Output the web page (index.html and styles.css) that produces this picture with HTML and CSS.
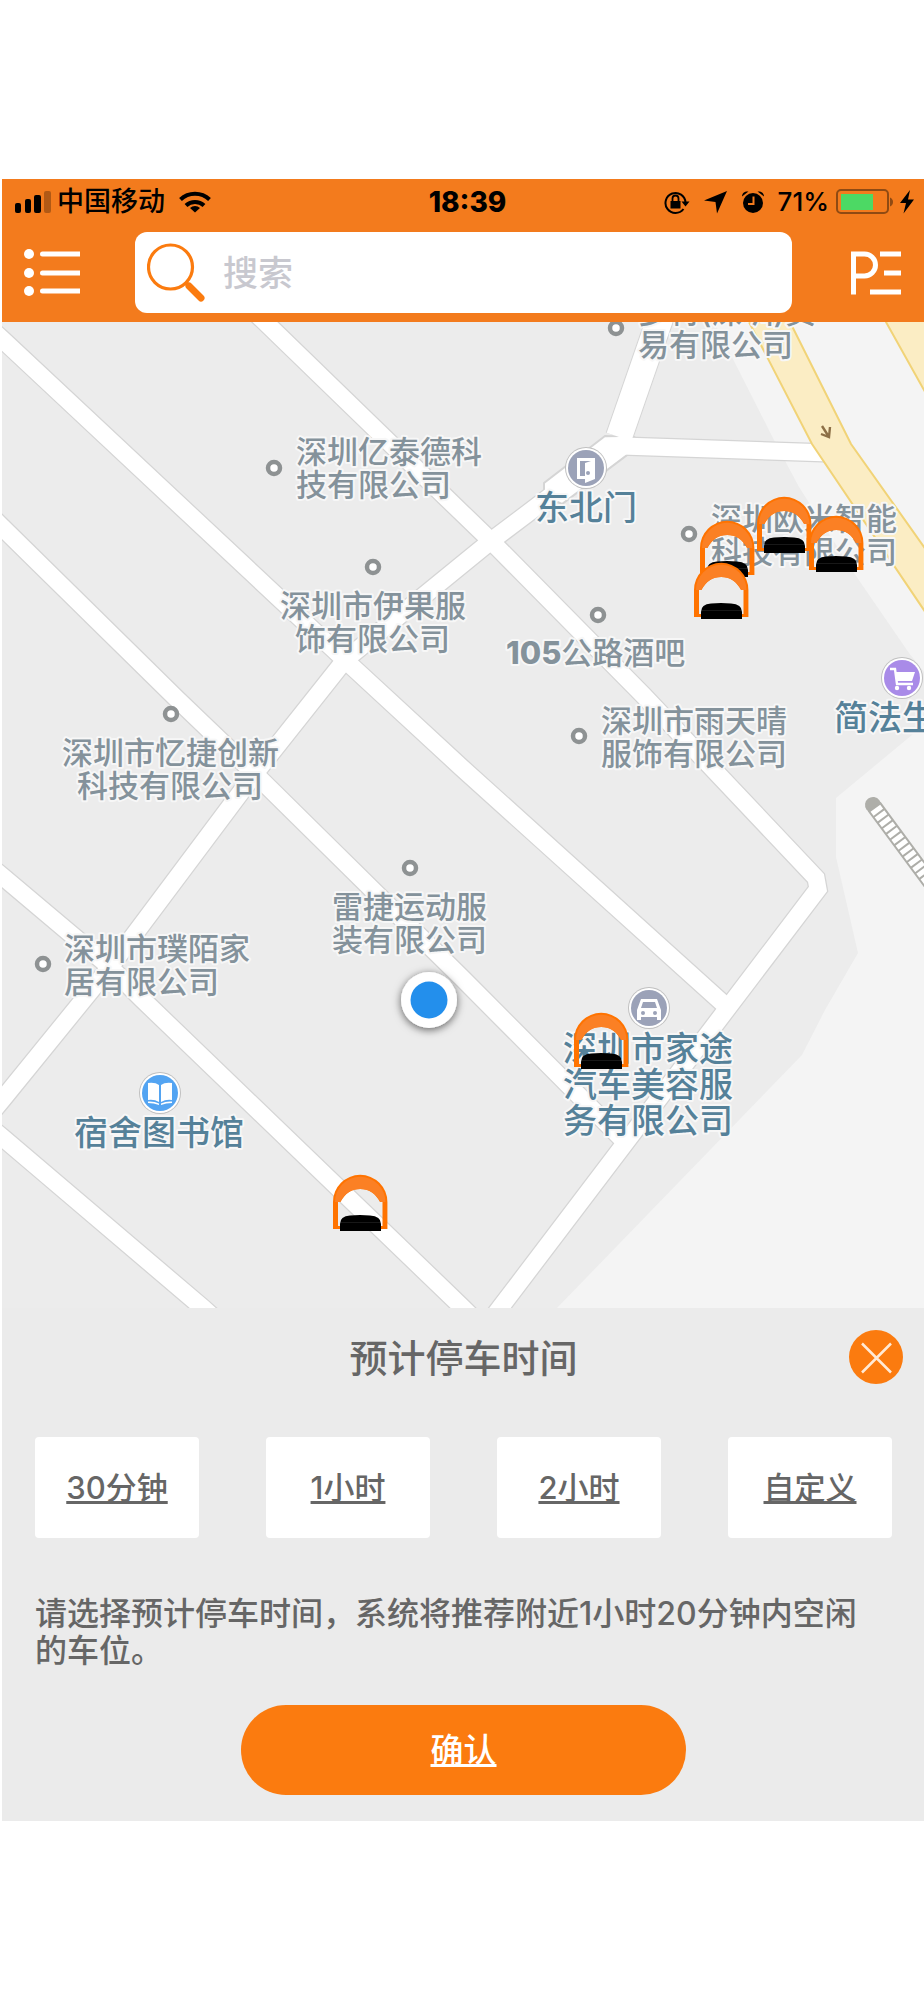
FILE: index.html
```html
<!DOCTYPE html>
<html lang="zh-CN">
<head>
<meta charset="utf-8">
<meta name="viewport" content="width=device-width, initial-scale=1">
<title>停车地图</title>
<link rel="stylesheet" href="styles.css">
</head>
<body>
<main class="app">
  <header class="header">
    <div class="status">
      <div class="status-side">
        <svg class="signal" viewBox="0 0 36 24" width="36" height="24" aria-hidden="true"><rect x="0" y="13" width="6" height="10" rx="2"/><rect x="10" y="9" width="6" height="14" rx="2"/><rect x="19" y="5" width="7" height="18" rx="2"/><rect x="29" y="1" width="7" height="22" rx="2" opacity=".27"/></svg>
        <span class="carrier">中国移动</span>
        <svg class="wifi" viewBox="0 0 32 24" width="32" height="24" fill="none" stroke="#000" stroke-width="4" aria-hidden="true"><path d="M1.500 9.500a21 21 0 0 1 29 0M7 15.500a13 13 0 0 1 18 0"/><path d="M16 22.500l-5-4.500a7.500 7.500 0 0 1 10 0z" fill="#000" stroke="none"/></svg>
      </div>
      <time class="clock">18:39</time>
      <div class="status-side status-right">
        <svg viewBox="0 0 26 24" width="26" height="24" aria-hidden="true"><path d="M19.500 19A10 10 0 1 1 21.500 12.500" fill="none" stroke="#000" stroke-width="2"/><path d="M17.500 11.500h8L21.500 16.500zM6.500 11h10v7.500h-10z"/><path d="M8.500 12V8.500a3 3 0 0 1 6 0V12" fill="none" stroke="#000" stroke-width="1.800"/></svg>
        <svg class="nav-arrow" viewBox="0 0 24 24" width="24" height="24" aria-hidden="true"><path d="M23 1L13 23.500 11.500 12 0 10.500z"/></svg>
        <svg class="alarm" viewBox="0 0 22 24" width="22" height="24" aria-hidden="true"><circle cx="11" cy="13" r="10"/><path d="M0 6.500C0 3 3 1 6.500 1.500zM22 6.500C22 3 19 1 15.500 1.500z"/><path d="M11.500 6.500V14H6" fill="none" stroke="#f37b1d" stroke-width="2"/></svg>
        <span class="percent">71%</span>
        <svg class="battery" viewBox="0 0 58 26" width="58" height="26" aria-hidden="true"><rect x="1" y="1" width="51" height="23" rx="4" fill="none" stroke="#8f4a13" stroke-width="2"/><rect x="5" y="5" width="32" height="16" fill="#4cd964"/><path d="M54 8.500q3 1.500 3 4.500t-3 4.500z" fill="#8f4a13"/></svg>
        <svg class="bolt" viewBox="0 0 14 24" width="14" height="24" aria-hidden="true"><path d="M10 0L0 13h6L3.500 23.500 14 9.500H8z"/></svg>
      </div>
    </div>
    <div class="toolbar">
      <button class="tool" type="button" aria-label="菜单">
        <svg viewBox="0 0 56 48" width="56" height="48" fill="#fff" aria-hidden="true"><circle cx="5" cy="5" r="5"/><circle cx="5" cy="24" r="5"/><circle cx="5" cy="42" r="5"/><path d="M18.500 2.500H56v5H18.500a2.500 2.500 0 0 1 0-5zM18.500 21.500H56v5H18.500a2.500 2.500 0 0 1 0-5zM18.500 39.500H56v5H18.500a2.500 2.500 0 0 1 0-5z"/></svg>
      </button>
      <label class="search">
        <svg viewBox="0 0 58 60" width="58" height="60" fill="none" stroke="#fb7b0f" aria-hidden="true"><circle cx="23.500" cy="24" r="22" stroke-width="3.200"/><path d="M39 40l3 3" stroke-width="4"/><path d="M42 43l12 12" stroke-width="7" stroke-linecap="round"/></svg>
        <input class="search-input" type="search" placeholder="搜索" aria-label="搜索">
      </label>
      <button class="tool tool-right" type="button" aria-label="停车">
        <svg viewBox="0 0 50 44" width="50" height="44" fill="none" stroke="#fff" stroke-width="5" aria-hidden="true"><path d="M2.500 43.500V3h11a11 11 0 0 1 0 22H3"/><path d="M29 3h21M33 22h17M19 41h31"/></svg>
      </button>
    </div>
  </header>

  <section class="map" aria-label="地图">
    <svg class="map-canvas" viewBox="2 322 922 986" role="img" aria-label="附近车位">
      <defs>
        <filter id="glow" x="-50%" y="-50%" width="200%" height="200%"><feDropShadow dx="0" dy="2" stdDeviation="4" flood-color="#000" flood-opacity=".6"/></filter>
        <g id="roads">
          <path d="M-8 330L2 339 345 660 462 768 727 1007"/>
          <path d="M245 303L265 322 462 513 491 541 644 696 816 878 818 889 500 1308 490 1321"/>
          <path d="M-8 517L2 527 178 700 253 772 462 978 621 1138"/>
          <path d="M-8 868L2 876 110 967 142 999 463 1308 473 1318"/>
          <path d="M-8 1129L2 1137 203 1308 213 1317"/>
          <path d="M622 446L556 492 491 541 345 660 253 776 110 967 2 1100-8 1112"/>
          <path d="M622 446L830 453"/>
        </g>
        <g id="poi">
          <circle r="21" fill="#c0c0c0"/><circle r="20" fill="#fff"/><circle r="18"  fill="currentColor"/>
        </g>
        <g id="dot"><circle r="6" fill="#fff" stroke="#8e9293" stroke-width="4.500"/></g>
        <g id="spot">
          <path d="M0 54V27a27.200 27.200 0 0 1 54.400 0v27H45v-3h4.500V27h-2.500q-7-13-19.800-13T7.500 27H5v24h4v3z" fill="#ff7300"/>
          <path d="M2 27a25.200 25.200 0 0 1 50.400 0h-5q-7-13-20.200-13T7 27z" fill="#fb8024"/>
          <path d="M7 56V49q0-8 10-8.500 10-.800 20 0 11 .500 11 8.500v7z"/>
          <path d="M8 47.500h39" stroke="#222" stroke-width=".7"/>
        </g>
      </defs>

      <rect x="2" y="322" width="922" height="986" fill="#ececec"/>
      <path d="M714 322L735 363 775 442 799 487 854 573 909 653 924 672V322zM924 725L836 798V857L858 953 825 1010 802 1055 557 1308H924z" fill="#f4f4f4"/>

      <g fill="none">
        <use href="#roads" stroke="#d5d5d5" stroke-width="19.500"/>
        <path d="M662 313L619 437" stroke="#d5d5d5" stroke-width="28"/>
        <path d="M605 436L544 483V496L562 504 627 455 634 437z" fill="#fff" stroke="#d5d5d5" stroke-width="2"/>
        <use href="#roads" stroke="#fff" stroke-width="17"/>
        <path d="M662 313L619 437" stroke="#fff" stroke-width="26"/>
        <path d="M606 438L546 485V496L562 502 626 454 632 436z" fill="#fff"/>
      </g>
      <path d="M744 312L749 322 812 444 934 625V561L851 444 790 322 785 312zM881 312L886 322 924 390 934 408V312z" fill="#fbedc4" stroke="#f1d377" stroke-width="2"/>
      <path d="M822 426l7 11m-8-3l8 3 1-10" fill="none" stroke="#8d7047" stroke-width="2.400"/>

      <g transform="translate(873 805) rotate(53.500)">
        <circle r="8" fill="#aeaea9"/>
        <path d="M3-7H100V7H3z" fill="#fff" stroke="#aeaea9" stroke-width="2"/>
        <path d="M10-7V7M17-7V7M24-7V7M31-7V7M38-7V7M45-7V7M52-7V7M59-7V7M66-7V7M73-7V7M80-7V7M87-7V7" stroke="#aeaea9" stroke-width="2"/>
      </g>

      <use href="#dot" x="616" y="328"/><use href="#dot" x="274" y="468"/><use href="#dot" x="373" y="567"/>
      <use href="#dot" x="171" y="714"/><use href="#dot" x="43" y="964"/><use href="#dot" x="410" y="868"/>
      <use href="#dot" x="579" y="736"/><use href="#dot" x="598" y="615"/><use href="#dot" x="689" y="534"/>

      <g transform="translate(586 468)" color="#9ba2b8">
        <use href="#poi"/><path d="M-9-10H9V11L-1 15V11H-9zM-6-7V8h5V-5L5-7z" fill="#fff" fill-rule="evenodd"/><circle cx="2" cy="5" r="2" fill="#9ba2b8"/>
      </g>
      <g transform="translate(902 678)" color="#a98be8">
        <use href="#poi"/><path d="M-12-9h5L-5 6H11" fill="none" stroke="#fff" stroke-width="2.400"/><path d="M-7-6H13L10 3H-5z" fill="#fff"/><circle cx="-5" cy="10" r="2.200" fill="#fff"/><circle cx="7" cy="10" r="2.200" fill="#fff"/>
      </g>
      <g transform="translate(160 1093)" color="#53a4f2">
        <use href="#poi"/><path d="M-12-10Q-5-11-1-8V9Q-6 6-12 7zM12-10Q5-11 1-8V9Q6 6 12 7zM-12 8.500Q-6 8-1 10.500V12Q-6 10-12 10zM12 8.500Q6 8 1 10.500V12Q6 10 12 10z" fill="#fff"/>
      </g>
      <g transform="translate(649 1008)" color="#9ba2b8">
        <use href="#poi"/><path d="M-8-9H8L12 2V12H8V9H-8V12H-12V2zM-6-6L-8 0H8L6-6z" fill="#fff" fill-rule="evenodd"/><circle cx="-6" cy="5" r="2" fill="#9ba2b8"/><circle cx="6" cy="5" r="2" fill="#9ba2b8"/>
      </g>

      <g class="place">
        <text x="638" y="323">多特(深圳)贸<tspan x="638" dy="33">易有限公司</tspan></text>
        <text x="296" y="463">深圳亿泰德科<tspan x="296" dy="33">技有限公司</tspan></text>
        <text x="280" y="617">深圳市伊果服<tspan x="295" dy="33">饰有限公司</tspan></text>
        <text x="62" y="764">深圳市忆捷创新<tspan x="77" dy="33">科技有限公司</tspan></text>
        <text x="64" y="960">深圳市璞陌家<tspan x="64" dy="33">居有限公司</tspan></text>
        <text x="332" y="918">雷捷运动服<tspan x="332" dy="33">装有限公司</tspan></text>
        <text x="601" y="732">深圳市雨天晴<tspan x="601" dy="33">服饰有限公司</tspan></text>
        <text x="506" y="664"><tspan class="place-number">105</tspan>公路酒吧</text>
        <text x="711" y="530">深圳欧米智能<tspan x="711" dy="33">科技有限公司</tspan></text>
      </g>
      <g class="landmark">
        <text x="535" y="520">东北门</text>
        <text x="834" y="730">简法生活</text>
        <text x="74" y="1145">宿舍图书馆</text>
        <text x="563" y="1061">深圳市家途<tspan x="563" dy="36">汽车美容服</tspan><tspan x="563" dy="36">务有限公司</tspan></text>
      </g>

      <use href="#spot" x="700" y="521"/><use href="#spot" x="757" y="497"/><use href="#spot" x="809" y="516"/>
      <use href="#spot" x="694" y="563"/><use href="#spot" x="574" y="1013"/><use href="#spot" x="333" y="1175"/>
      <circle cx="429" cy="1000" r="28" fill="#fff" filter="url(#glow)"/>
      <circle cx="429" cy="1000" r="18.500" fill="#238fec"/>
    </svg>
  </section>

  <section class="panel" aria-labelledby="panel-title">
    <div class="panel-head">
      <h1 class="panel-title" id="panel-title">预计停车时间</h1>
      <button class="close" type="button" aria-label="关闭">
        <svg viewBox="0 0 54 54" width="54" height="54" aria-hidden="true"><circle cx="27" cy="27" r="27" fill="#fb7b0f"/><path d="M13 13.500L42 42.500M42 13.500L13 42.500" stroke="#ffead6" stroke-width="2.500"/></svg>
      </button>
    </div>
    <div class="options">
      <button class="option" type="button">30分钟</button>
      <button class="option" type="button">1小时</button>
      <button class="option" type="button">2小时</button>
      <button class="option" type="button">自定义</button>
    </div>
    <p class="hint">请选择预计停车时间，系统将推荐附近1小时20分钟内空闲的车位。</p>
    <button class="confirm" type="button">确认</button>
  </section>
</main>
</body>
</html>
```

FILE: styles.css
```css
* {
  box-sizing: border-box;
}

body {
  margin: 0;
  background: #fff;
  color: #666;
  font-family: Inter, "Noto Sans CJK SC", sans-serif;
}

button {
  border: 0;
  padding: 0;
  background: none;
  color: inherit;
  font: inherit;
  cursor: pointer;
}

svg {
  display: block;
  flex: none;
}

.app {
  padding: 179px 0 0 2px;
}

.header {
  padding-bottom: 9px;
  background: #f37b1d;
}

.status {
  display: grid;
  grid-template-columns: 1fr auto 1fr;
  align-items: center;
  height: 46px;
  padding: 0 10px 0 13px;
  color: #000;
  font-size: 27px;
  line-height: 46px;
}

.status-side {
  display: flex;
  align-items: center;
}

.status-right {
  justify-content: flex-end;
}

.carrier {
  margin: 0 14px 0 6px;
  font-weight: 500;
}

.clock {
  padding-left: 6px;
  font-size: 28px;
  font-weight: 800;
}

.nav-arrow {
  margin-left: 14px;
}

.alarm {
  margin-left: 14px;
}

.percent {
  margin: 0 7px 0 14px;
  font-size: 26px;
  font-weight: 500;
}

.bolt {
  margin-left: 6px;
}

.toolbar {
  display: flex;
  align-items: center;
  padding-top: 7px;
}

.tool {
  display: flex;
  width: 133px;
  padding-left: 22px;
}

.tool-right {
  width: 132px;
  padding-left: 59px;
}

.search {
  display: flex;
  flex: 1;
  align-items: center;
  gap: 18px;
  min-width: 0;
  height: 81px;
  padding: 0 12px;
  border-radius: 12px;
  background: #fff;
}

.search-input {
  flex: 1;
  min-width: 0;
  height: 60px;
  border: 0;
  padding: 0;
  outline: 0;
  background: none;
  color: #333;
  font: inherit;
  font-size: 35px;
  font-weight: 500;
}

.search-input::placeholder {
  color: #c8c8cf;
  opacity: 1;
}

.map-canvas {
  width: 100%;
  height: auto;
}

.place,
.landmark {
  font-weight: 500;
  paint-order: stroke;
  stroke: #f7f7f7;
  stroke-width: 4px;
  stroke-linejoin: round;
}

.place {
  fill: #84929b;
  font-size: 31px;
}

.place-number {
  font-weight: 800;
}

.landmark {
  fill: #558199;
  font-size: 34px;
}

.panel {
  padding: 22px 32px 26px 33px;
  background: #ebebeb;
}

.panel-head {
  display: grid;
  grid-template-columns: 1fr auto 1fr;
  align-items: center;
}

.panel-title {
  grid-column: 2;
  margin: 0;
  padding-top: 2px;
  font-size: 38px;
  font-weight: 500;
  line-height: 52px;
}

.close {
  justify-self: end;
  margin-right: -11px;
}

.options {
  display: grid;
  grid-template-columns: repeat(4, 1fr);
  gap: 67px;
  margin-top: 53px;
}

.option {
  height: 101px;
  border-radius: 4px;
  background: #fff;
  font-size: 31px;
  font-weight: 500;
}

.option,
.confirm {
  padding-bottom: 4px;
  text-decoration: underline 3px;
  text-decoration-skip-ink: none;
  text-underline-offset: 2px;
}

.hint {
  margin: 57px 32px 0 0;
  font-size: 32px;
  font-weight: 500;
  line-height: 37px;
}

.confirm {
  display: block;
  width: 52%;
  max-width: 446px;
  height: 90px;
  margin: 36px auto 0;
  border-radius: 45px;
  background: #fb7b0f;
  color: #fff;
  font-size: 33px;
  font-weight: 500;
}
```
